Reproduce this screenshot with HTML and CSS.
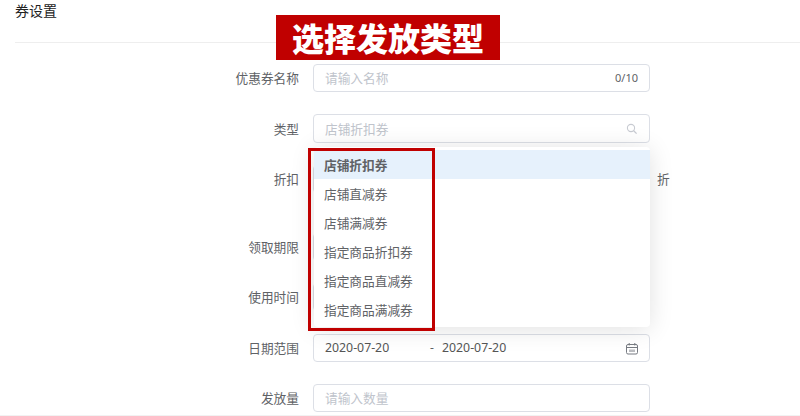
FILE: index.html
```html
<!DOCTYPE html>
<html lang="zh-CN">
<head>
<meta charset="utf-8">
<title>券设置</title>
<link rel="stylesheet" href="styles.css">
</head>
<body>
<header class="head">券设置</header>
<form class="form">
  <div class="row">
    <label class="label">优惠券名称</label>
    <div class="input"><span class="ph">请输入名称</span><span class="count">0/10</span></div>
  </div>
  <div class="row row-type">
    <label class="label">类型</label>
    <div class="input input-type"><span class="ph">店铺折扣券</span>
      <svg class="icon" width="12" height="12" viewBox="0 0 12 12"><circle cx="5" cy="5" r="3.6" fill="none" stroke="#c8cbd2" stroke-width="1.1"/><path d="M7.7 7.7 10.6 10.6" stroke="#c8cbd2" stroke-width="1.3"/></svg>
    </div>
  </div>
  <div class="row row-discount">
    <label class="label">折扣</label>
    <div class="input"></div>
    <span class="suffix">折</span>
  </div>
  <div class="row">
    <label class="label">领取期限</label>
    <div class="input"></div>
  </div>
  <div class="row row-use">
    <label class="label">使用时间</label>
    <div class="input"></div>
  </div>
  <div class="row">
    <label class="label">日期范围</label>
    <div class="input"><span class="date">2020-07-20</span><span class="dash">-</span><span class="date">2020-07-20</span>
      <svg class="icon" width="12" height="13" viewBox="0 0 12 13" fill="none" stroke="#777b82"><rect x=".5" y="2.5" width="11" height="9.5" rx="1.5"/><path d="M.5 5.5H11.5M3.2 1V3.5M8.8 1V3.5M4 7.5V10M6 7.5V10M8 7.5V10"/></svg>
    </div>
  </div>
  <div class="row">
    <label class="label">发放量</label>
    <div class="input"><span class="ph">请输入数量</span></div>
  </div>
</form>
<div class="banner">选择发放类型</div>
<ul class="menu">
  <li class="item active">店铺折扣券</li>
  <li class="item">店铺直减券</li>
  <li class="item">店铺满减券</li>
  <li class="item">指定商品折扣券</li>
  <li class="item">指定商品直减券</li>
  <li class="item">指定商品满减券</li>
</ul>
<div class="mark"></div>
</body>
</html>
```
FILE: styles.css
```css
* { box-sizing: border-box; }
html, body { margin: 0; padding: 0; }
body {
  position: relative;
  width: 800px;
  height: 416px;
  overflow: hidden;
  background: #fff;
  font-family: "Noto Sans CJK SC", "Noto Sans", sans-serif;
  font-size: 12.7px;
  color: #606266;
  border-bottom: 1px solid #f2f2f2;
}
.head {
  margin-left: 15px;
  height: 43px;
  font-size: 14px;
  line-height: 20px;
  color: #222;
  border-bottom: 1px solid #eee;
}
.form { padding: 21px 0 0 15px; }
.row {
  display: grid;
  grid-template-columns: 284px 337px auto;
  column-gap: 14px;
  height: 28px;
  margin-bottom: 22px;
  align-items: center;
  line-height: 26px;
}
.row-type { height: 29px; }
.row-discount { margin-bottom: 40px; }
.row-use { margin-bottom: 23px; }
.label { text-align: right; color: #606266; }
.input {
  display: flex;
  align-items: center;
  height: 100%;
  padding: 0 11px;
  border: 1px solid #dcdfe6;
  border-radius: 4px;
  background: #fff;
}
.ph { color: #c0c4cc; }
.count { margin-left: auto; color: #606266; font-family: "Noto Sans", sans-serif; font-size: 11px; }
.icon { margin-left: auto; flex: none; }
.suffix { margin-left: -7px; }
.date { color: #555; font-family: "Noto Sans", sans-serif; font-size: 12.3px; width: 64px; white-space: nowrap; }
.dash { width: 53px; padding-left: 41px; font-family: "Noto Sans", sans-serif; font-size: 12px; }
.banner {
  position: absolute;
  left: 276px;
  top: 15px;
  width: 224px;
  height: 45px;
  background: #c00000;
  color: #fff;
  font-size: 32px;
  font-weight: 900;
  line-height: 45px;
  text-align: center;
}
.menu {
  position: absolute;
  left: 314px;
  top: 147px;
  width: 336px;
  height: 180px;
  margin: 0;
  padding: 3px 0 0;
  list-style: none;
  background: #fff;
  border-radius: 4px;
  box-shadow: 0 2px 24px rgba(0, 0, 0, .12);
}
.item {
  height: 29px;
  line-height: 30px;
  padding-left: 10px;
  color: #606266;
}
.active { background: #e6f1fc; font-weight: 700; }
.mark {
  position: absolute;
  left: 308px;
  top: 148px;
  width: 127px;
  height: 183px;
  border: 3px solid #c00000;
}
```
